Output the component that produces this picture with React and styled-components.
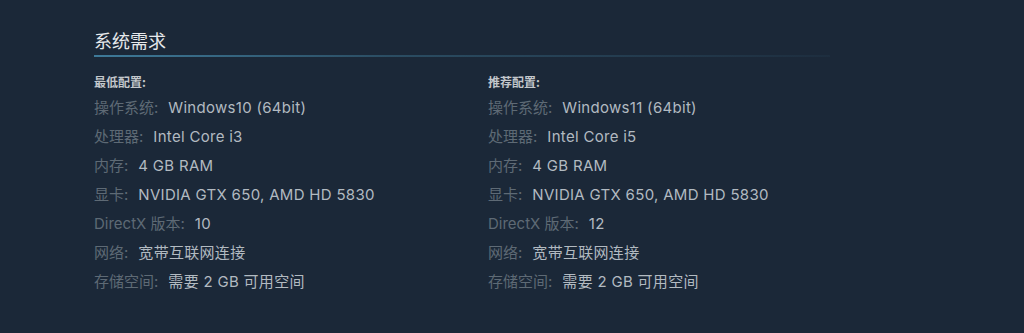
import React from "react";
import styled, { createGlobalStyle } from "styled-components";

const Global = createGlobalStyle`
  html, body { margin: 0; padding: 0; background: #1b2838; }
  body { font-family: Inter, "Noto Sans CJK SC", sans-serif; }
`;

const Page = styled.div`
  width: 1024px;
  height: 333px;
  background: #1b2838;
  padding: 26px 0 0 94px;
  box-sizing: border-box;
`;

const Section = styled.section`
  width: 736px;
`;

const Title = styled.h2`
  margin: 0;
  font-family: "Noto Sans CJK SC", sans-serif;
  font-weight: 400;
  font-size: 18px;
  line-height: 28px;
  color: #e6e9ec;
  padding-bottom: 1px;
`;

const Rule = styled.div`
  height: 2px;
  background: linear-gradient(to right, #3e7a99 0%, #2b4d63 40%, rgba(43, 77, 99, 0.15) 100%);
`;

const Columns = styled.div`
  display: grid;
  grid-template-columns: 394px 1fr;
  margin-top: 17px;
`;

const Column = styled.div`
  display: flex;
  flex-direction: column;
`;

const Heading = styled.div`
  font-family: "Noto Sans CJK SC", sans-serif;
  font-size: 12px;
  font-weight: 700;
  line-height: 16px;
  color: #c3c7cb;
  margin-bottom: 3px;
`;

const Row = styled.div`
  font-family: Inter, "Noto Sans CJK SC", sans-serif;
  font-size: 15px;
  line-height: 29px;
  color: #b2bac1;
  white-space: nowrap;
`;

const Label = styled.span`
  color: #5e6a75;
  margin-right: 10px;
`;

const Value = styled.span`
  letter-spacing: 0.3px;
`;

const minimum = [
  ["操作系统:", "Windows10 (64bit)"],
  ["处理器:", "Intel Core i3"],
  ["内存:", "4 GB RAM"],
  ["显卡:", "NVIDIA GTX 650, AMD HD 5830"],
  ["DirectX 版本:", "10"],
  ["网络:", "宽带互联网连接"],
  ["存储空间:", "需要 2 GB 可用空间"],
];

const recommended = [
  ["操作系统:", "Windows11 (64bit)"],
  ["处理器:", "Intel Core i5"],
  ["内存:", "4 GB RAM"],
  ["显卡:", "NVIDIA GTX 650, AMD HD 5830"],
  ["DirectX 版本:", "12"],
  ["网络:", "宽带互联网连接"],
  ["存储空间:", "需要 2 GB 可用空间"],
];

function Spec({ title, rows }) {
  return (
    <Column>
      <Heading>{title}</Heading>
      {rows.map(([l, v]) => (
        <Row key={l}>
          <Label>{l}</Label>
          <Value>{v}</Value>
        </Row>
      ))}
    </Column>
  );
}

export default function App() {
  return (
    <>
      <Global />
      <Page>
        <Section>
          <Title>系统需求</Title>
          <Rule />
          <Columns>
            <Spec title="最低配置:" rows={minimum} />
            <Spec title="推荐配置:" rows={recommended} />
          </Columns>
        </Section>
      </Page>
    </>
  );
}
